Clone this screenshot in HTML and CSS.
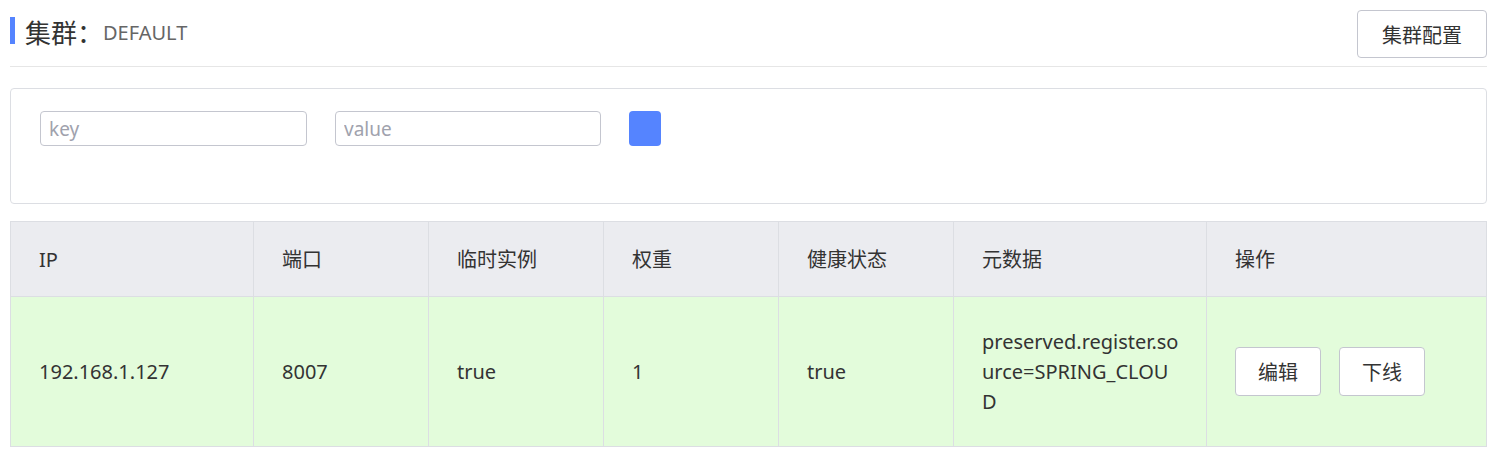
FILE: index.html
```html
<!DOCTYPE html>
<html lang="zh-CN">
<head>
    <meta charset="UTF-8">
    <meta name="viewport" content="width=device-width, initial-scale=1.0">
    <title>集群: DEFAULT</title>
    <link rel="stylesheet" href="styles.css">
</head>
<body>
    <div class="page">
        <div class="cluster-header">
            <div class="cluster-title">
                <span class="title-bar"></span>
                <span class="title-main">集群：</span>
                <span class="title-name">DEFAULT</span>
            </div>
            <button class="btn btn-config">集群配置</button>
        </div>

        <div class="filter-card">
            <input class="filter-input key-input" type="text" placeholder="key">
            <input class="filter-input value-input" type="text" placeholder="value">
            <button class="btn-primary"></button>
        </div>

        <table class="instance-table">
            <colgroup>
                <col style="width: 243px">
                <col style="width: 175px">
                <col style="width: 175px">
                <col style="width: 175px">
                <col style="width: 175px">
                <col style="width: 253px">
                <col>
            </colgroup>
            <thead>
                <tr>
                    <th>IP</th>
                    <th>端口</th>
                    <th>临时实例</th>
                    <th>权重</th>
                    <th>健康状态</th>
                    <th>元数据</th>
                    <th>操作</th>
                </tr>
            </thead>
            <tbody>
                <tr class="row-healthy">
                    <td>192.168.1.127</td>
                    <td>8007</td>
                    <td>true</td>
                    <td>1</td>
                    <td>true</td>
                    <td class="metadata">preserved.register.source=SPRING_CLOUD</td>
                    <td>
                        <div class="actions">
                            <button class="btn">编辑</button>
                            <button class="btn">下线</button>
                        </div>
                    </td>
                </tr>
            </tbody>
        </table>
    </div>
</body>
</html>
```

FILE: styles.css
```css
body {
    margin: 0;
    font-family: "Noto Sans", "Noto Sans CJK SC", sans-serif;
    color: #333;
    background-color: #fff;
}
.page {
    padding: 0 5px 0 10px;
}
.cluster-header {
    display: flex;
    justify-content: space-between;
    align-items: flex-start;
    padding: 10px 0 8px;
    border-bottom: 1px solid #e6e6e6;
}
.cluster-title {
    display: flex;
    align-items: center;
    margin-top: 7px;
    height: 27px;
}
.title-bar {
    width: 5px;
    height: 27px;
    background-color: #5584ff;
    margin-right: 10px;
}
.title-main {
    font-size: 26px;
    color: #333;
    margin-top: 3px;
}
.title-name {
    font-size: 20px;
    color: #666;
    margin-top: 4px;
}
.btn {
    height: 49px;
    padding: 0 22px;
    font-family: inherit;
    font-size: 20px;
    color: #333;
    background-color: #fff;
    border: 1px solid #c4c6cf;
    border-radius: 4px;
    cursor: pointer;
}
.btn-config {
    height: 48px;
    padding: 0 24px;
}
.filter-card {
    display: flex;
    align-items: flex-start;
    gap: 28px;
    margin-top: 21px;
    height: 57px;
    padding: 22px 29px 35px;
    border: 1px solid #dcdee3;
    border-radius: 4px;
}
.filter-input {
    box-sizing: border-box;
    height: 35px;
    padding: 0 8px;
    font-family: inherit;
    font-size: 19px;
    color: #333;
    border: 1px solid #c4c6cf;
    border-radius: 4px;
    outline: none;
}
.filter-input::placeholder {
    color: #a0a2ad;
}
.key-input {
    width: 267px;
}
.value-input {
    width: 266px;
}
.btn-primary {
    width: 32px;
    height: 35px;
    background-color: #5584ff;
    border: none;
    border-radius: 4px;
    cursor: pointer;
}
.instance-table {
    width: 100%;
    margin-top: 17px;
    border-collapse: collapse;
    table-layout: fixed;
    font-size: 20px;
    border: 1px solid #dcdee3;
}
.instance-table th,
.instance-table td {
    text-align: left;
    padding: 0 29px 0 28px;
    border: 1px solid #dcdee3;
    line-height: 30px;
}
.instance-table th {
    height: 72px;
    padding-top: 2px;
    font-weight: normal;
    background-color: #ebecf0;
}
.instance-table td {
    height: 149px;
}
.row-healthy td {
    background-color: #e3fcdb;
}
.instance-table .metadata {
    padding-right: 26px;
    word-break: break-all;
}
.actions {
    display: flex;
    gap: 18px;
}
```
